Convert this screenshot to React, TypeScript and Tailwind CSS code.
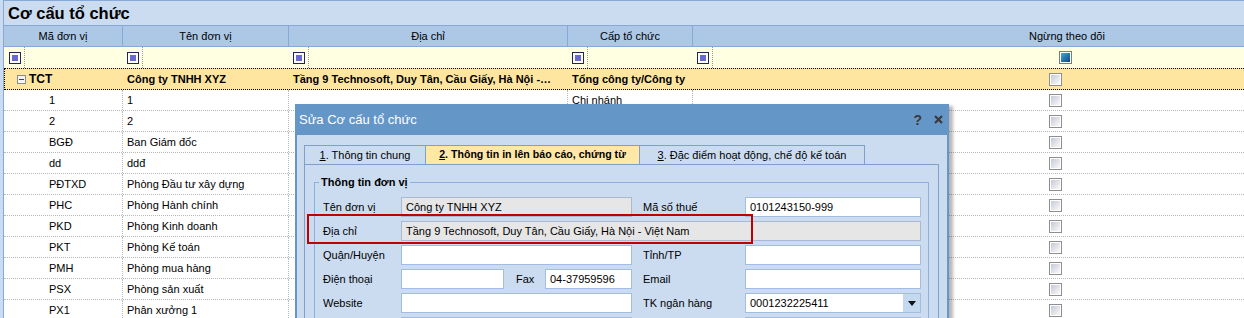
import React from "react";

const rows: [string, string, string, string][] = [
  ["1", "1", "", "Chi nhánh"],
  ["2", "2", "", ""],
  ["BGĐ", "Ban Giám đốc", "", ""],
  ["dd", "ddđ", "", ""],
  ["PĐTXD", "Phòng Đầu tư xây dựng", "", ""],
  ["PHC", "Phòng Hành chính", "", ""],
  ["PKD", "Phòng Kinh doanh", "", ""],
  ["PKT", "Phòng Kế toán", "", ""],
  ["PMH", "Phòng mua hàng", "", ""],
  ["PSX", "Phòng sản xuất", "", ""],
  ["PX1", "Phân xưởng 1", "", ""],
];

function FilterIcon() {
  return (
    <span className="flex w-[12px] h-[12px] shrink-0 border border-[#23235a] bg-white p-[2px]">
      <span className="flex-1 bg-[#6a6ad2]" />
    </span>
  );
}

function FilterStart() {
  return (
    <>
      <FilterIcon />
      <span className="ml-[3px] h-full border-l border-dotted border-[#9a9a9a]" />
    </>
  );
}

function Check() {
  return (
    <span className="flex w-[13px] h-[13px] shrink-0 border border-[#8e8e8e] bg-white p-[1px]">
      <span className="flex-1 bg-linear-to-br from-[#c6cad6] to-[#fafafa]" />
    </span>
  );
}

function BlueCheck() {
  return (
    <span className="flex w-[13px] h-[13px] shrink-0 border border-[#7c7c7c] bg-white p-[1px]">
      <span className="flex-1 bg-linear-to-br from-[#47a6e0] to-[#0c4a80]" />
    </span>
  );
}

function Field({ cls, v }: { cls: string; v?: string }) {
  return (
    <div className={`h-[20px] shrink-0 flex items-center pl-[4px] border ${cls}`}>
      <span className="whitespace-nowrap">{v}</span>
    </div>
  );
}

export default function App() {
  return (
    <div className="relative w-[1244px] h-[318px] overflow-hidden bg-white flex text-[11px] text-black font-['Liberation_Sans',Arial,sans-serif]">
      <div className="w-[4px] shrink-0 bg-[#cbdcf0] border-r border-[#86a9d8]" />
      <div className="flex-1 min-w-0 flex flex-col">
        <div className="h-[26px] shrink-0 bg-[#cbdcf0] border-y border-[#86a9d8] flex items-center pl-[4px]">
          <span className="text-[16.5px] font-bold leading-none">Cơ cấu tổ chức</span>
        </div>
        {/* header */}
        <div className="h-[21px] shrink-0 bg-[#adc8e6] border-b border-[#86a9d8] flex">
          <div className="w-[119px] shrink-0 border-r border-[#86a9d8] flex items-center justify-center">Mã đơn vị</div>
          <div className="w-[166px] shrink-0 border-r border-[#86a9d8] flex items-center justify-center">Tên đơn vị</div>
          <div className="w-[279px] shrink-0 border-r border-[#86a9d8] flex items-center justify-center">Địa chỉ</div>
          <div className="w-[125px] shrink-0 border-r border-[#86a9d8] flex items-center justify-center">Cấp tổ chức</div>
          <div className="w-[748px] shrink-0 flex items-center justify-center">Ngừng theo dõi</div>
        </div>
        {/* filter row */}
        <div className="h-[21px] shrink-0 bg-[#ffffe1] flex">
          <div className="w-[119px] shrink-0 flex items-center pl-[5px]"><FilterStart /></div>
          <div className="w-[166px] shrink-0 flex items-center pl-[4px]"><FilterStart /></div>
          <div className="w-[279px] shrink-0 flex items-center pl-[4px]"><FilterStart /></div>
          <div className="w-[125px] shrink-0 flex items-center pl-[4px]"><FilterStart /></div>
          <div className="w-[748px] shrink-0 flex items-center pl-[4px]">
            <FilterStart />
            <span className="ml-[346px]"><BlueCheck /></span>
          </div>
        </div>
        {/* TCT row */}
        <div className="h-[22px] shrink-0 bg-[#fee6a0] border border-r-0 border-dotted border-black flex font-bold">
          <div className="w-[118px] shrink-0 flex items-center pl-[12px]">
            <span className="flex items-center justify-center w-[9px] h-[9px] border border-[#8c8c8c] bg-[#f4f4f4]">
              <span className="w-[5px] h-px bg-[#444]" />
            </span>
            <span className="ml-[3px] text-[12px]">TCT</span>
          </div>
          <div className="w-[166px] shrink-0 flex items-center pl-[4px]">Công ty TNHH XYZ</div>
          <div className="w-[279px] shrink-0 flex items-center pl-[4px]">
            <span className="whitespace-nowrap">Tầng 9 Technosoft, Duy Tân, Cầu Giấy, Hà Nội -…</span>
          </div>
          <div className="w-[125px] shrink-0 flex items-center pl-[4px]">Tổng công ty/Công ty</div>
          <div className="w-[748px] shrink-0 flex items-center pl-[356px]"><Check /></div>
        </div>
        {rows.map((r, i) => (
          <div key={i} className="h-[21px] shrink-0 border-b border-dotted border-[#b8b8b8] flex">
            <div className="w-[119px] shrink-0 border-r border-dotted border-[#b8b8b8] flex items-center pl-[45px]">{r[0]}</div>
            <div className="w-[166px] shrink-0 border-r border-dotted border-[#b8b8b8] flex items-center pl-[4px]">{r[1]}</div>
            <div className="w-[279px] shrink-0 border-r border-dotted border-[#b8b8b8] flex items-center pl-[4px]">{r[2]}</div>
            <div className="w-[125px] shrink-0 border-r border-dotted border-[#b8b8b8] flex items-center pl-[4px]">{r[3]}</div>
            <div className="w-[748px] shrink-0 flex items-center pl-[356px]"><Check /></div>
          </div>
        ))}
      </div>

      {/* Dialog */}
      <div className="absolute left-[295px] top-[104px] w-[654px] h-[220px] bg-[#6596c8] px-[2px] flex flex-col shadow-[4px_2px_3px_rgba(0,0,0,0.28)]">
        <div className="h-[31px] shrink-0 flex items-center justify-between pl-[2px] pr-[4px]">
          <span className="text-white text-[13px]">Sửa Cơ cấu tổ chức</span>
          <div className="flex items-center gap-[12px]">
            <span className="text-[14px] font-bold text-[#3a3a3a] leading-none">?</span>
            <svg width="9" height="9" viewBox="0 0 9 9">
              <path d="M1 1L8 8M8 1L1 8" stroke="#3a3a3a" strokeWidth="2.2" />
            </svg>
          </div>
        </div>
        <div className="flex-1 bg-[#cbdcf1] pt-[10px] pl-[7px]">
          <div className="flex h-[20px]">
            <div className="w-[122px] shrink-0 border border-[#7f9fcc] flex items-center justify-center">
              <span><span className="underline">1</span>. Thông tin chung</span>
            </div>
            <div className="w-[215px] shrink-0 -ml-px border border-[#7f9fcc] bg-[#ffe8a6] flex items-center justify-center font-bold text-[10.6px]">
              <span><span className="underline">2</span>. Thông tin in lên báo cáo, chứng từ</span>
            </div>
            <div className="w-[226px] shrink-0 -ml-px border border-[#7f9fcc] flex items-center justify-center">
              <span><span className="underline">3</span>. Đặc điểm hoạt động, chế độ kế toán</span>
            </div>
          </div>
          <div className="w-[635px] h-[200px] -mt-px border border-[#7f9fcc] px-[9px] pt-[10px]">
            <fieldset className="border border-[#8eaedb] h-[180px] pl-[8px]">
              <legend className="ml-[-4px] px-[2px] font-bold leading-[14px]">Thông tin đơn vị</legend>
              <div className="mt-[8px] flex flex-col gap-[4px]">
                <div className="flex items-center">
                  <span className="w-[78px] shrink-0">Tên đơn vị</span>
                  <Field cls="w-[231px] border-[#aab9cf] bg-[#e6e6e6]" v="Công ty TNHH XYZ" />
                  <span className="w-[102px] shrink-0 ml-[11px]">Mã số thuế</span>
                  <Field cls="w-[176px] border-[#a3bde0] bg-white" v="0101243150-999" />
                </div>
                <div className="flex items-center">
                  <span className="w-[78px] shrink-0">Địa chỉ</span>
                  <Field cls="w-[520px] border-[#aab9cf] bg-[#e6e6e6]" v="Tầng 9 Technosoft, Duy Tân, Cầu Giấy, Hà Nội - Việt Nam" />
                </div>
                <div className="flex items-center">
                  <span className="w-[78px] shrink-0">Quận/Huyện</span>
                  <Field cls="w-[231px] border-[#a3bde0] bg-white" />
                  <span className="w-[102px] shrink-0 ml-[11px]">Tỉnh/TP</span>
                  <Field cls="w-[176px] border-[#a3bde0] bg-white" />
                </div>
                <div className="flex items-center">
                  <span className="w-[78px] shrink-0">Điện thoại</span>
                  <Field cls="w-[103px] border-[#a3bde0] bg-white" />
                  <span className="w-[29px] shrink-0 ml-[12px]">Fax</span>
                  <Field cls="w-[87px] border-[#a3bde0] bg-white" v="04-37959596" />
                  <span className="w-[102px] shrink-0 ml-[11px]">Email</span>
                  <Field cls="w-[176px] border-[#a3bde0] bg-white" />
                </div>
                <div className="flex items-center">
                  <span className="w-[78px] shrink-0">Website</span>
                  <Field cls="w-[231px] border-[#a3bde0] bg-white" />
                  <span className="w-[102px] shrink-0 ml-[11px]">TK ngân hàng</span>
                  <div className="w-[176px] h-[20px] shrink-0 border border-[#a3bde0] bg-white flex items-center">
                    <span className="flex-1 pl-[4px]">0001232225411</span>
                    <span className="w-[17px] h-full bg-[#c4d8f0] flex items-center justify-center">
                      <svg width="8" height="5" viewBox="0 0 8 5"><path d="M0 0H8L4 5Z" fill="#111" /></svg>
                    </span>
                  </div>
                </div>
                <div className="flex items-center">
                  <span className="w-[78px] shrink-0">&nbsp;</span>
                  <Field cls="w-[231px] border-[#a3bde0] bg-white" />
                  <span className="w-[102px] shrink-0 ml-[11px]">&nbsp;</span>
                  <Field cls="w-[176px] border-[#a3bde0] bg-white" />
                </div>
              </div>
            </fieldset>
          </div>
        </div>
      </div>

      {/* red highlight annotation */}
      <div className="absolute left-[307px] top-[214px] w-[446px] h-[30px] border-2 border-[#c00000]" />
    </div>
  );
}
